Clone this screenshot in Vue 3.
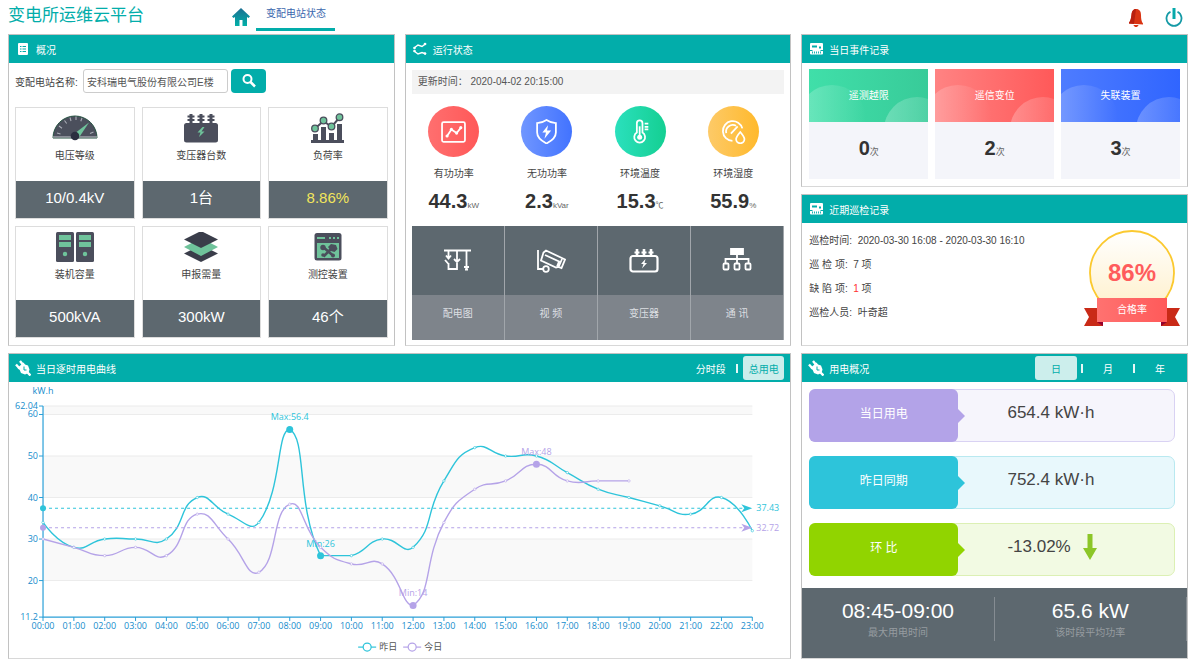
<script setup>
import { ref } from 'vue'

const station = ref('安科瑞电气股份有限公司E楼')
const chartMode = ref('总用电')
const period = ref('日')

const icons = {
  gauge: `<path d="M1 25a22 22 0 0 1 44 0z" fill="#4b4f5c" stroke="#23503f" stroke-width="1"/>
    <path d="M1 24h44" stroke="#c9ccd2" stroke-width="1.2"/>
    <path d="M5 20l3.500 1M7 13l3 2.200M12.500 7.500l2.200 3M18 4.500l1 3.500M24 3.500v3.500M30 5l-1.200 3.200M41.500 19l-3.500 1.500" stroke="#a9adb6" stroke-width="1.100"/>
    <path d="M22.500 20.500L37 9.500l-10 15z" fill="#6fc39b"/><circle cx="23" cy="23" r="4.300" fill="#2b2f3f"/>`,
  transformer: `<path d="M13 1v9M23 1v9M33 1v9" stroke="#4b4e5c" stroke-width="3"/>
    <path d="M9.500 3.500h7M9.500 7h7M19.500 3.500h7M19.500 7h7M29.500 3.500h7M29.500 7h7" stroke="#4b4e5c" stroke-width="1.800"/>
    <rect x="6" y="10" width="34" height="19.500" rx="2.500" fill="#4b4e5c"/>
    <path d="M24.500 14l-5 5.500h3l-1.500 4.500 5.500-5.500h-3l3-4.500z" fill="#6fc39b"/>`,
  load: `<path d="M6 28.500h33" stroke="#4b4e5c" stroke-width="3"/><path d="M10.500 28v-7M18.500 28v-14M26.500 28v-8M34.500 28v-17" stroke="#4b4e5c" stroke-width="5"/>
    <path d="M10 15.500l8.500-7.500 8 6 8-9.500" fill="none" stroke="#4b4e5c" stroke-width="2"/>
    <g fill="#6fc39b" stroke="#4b4e5c" stroke-width="1.300"><circle cx="10" cy="15.500" r="3.300"/><circle cx="18.500" cy="7.500" r="3.300"/><circle cx="26.500" cy="13.500" r="3.300"/><circle cx="34.500" cy="4.200" r="3.300"/></g>`,
  servers: `<g fill="#4b4e5c"><rect x="4" y="0" width="18" height="30" rx="1.500"/><rect x="24" y="0" width="18" height="30" rx="1.500"/></g>
    <g fill="#6fc39b"><path d="M7 3h12v5H7zM7 10h12v5H7zM27 3h12v5H27zM27 10h12v5H27z"/><circle cx="13" cy="22" r="2.200"/><circle cx="33" cy="22" r="2.200"/></g>`,
  layers: `<path d="M23 13l17 8.500-17 8.500-17-8.500z" fill="#3a3d4a"/><path d="M23 6l17 9-17 9-17-9z" fill="#6fc39b"/><path d="M23-1l17 8.500L23 16 6 7.500z" fill="#3a3d4a"/>`,
  device: `<rect x="9.500" y="1" width="27" height="27.500" rx="2.500" fill="#4b4e5c"/><path d="M12 11h22v15H12z" fill="#6fc39b"/>
    <path d="M12 6h8M24 6h2M28 6h2M32 6h2" stroke="#6fc39b" stroke-width="1.800"/>
    <path d="M17 14l11.500 10M29 14L18.500 24.500" stroke="#4b4e5c" stroke-width="2.600"/><circle cx="18" cy="15.500" r="2.700" fill="#4b4e5c"/><path d="M23 15l3-3 5 1 1.500 4-3 3-3.500-1z" fill="#4b4e5c"/><circle cx="18" cy="23" r="1.800" fill="#4b4e5c"/><circle cx="28" cy="23.500" r="2" fill="#4b4e5c"/>`,
  trend: `<rect x="1" y="3" width="22" height="19" rx="1.500"/><path d="M6 16l4-6 5 3.500 4-5"/><g fill="#fff" stroke="none"><circle cx="5.800" cy="16.300" r="1.500"/><circle cx="10" cy="9.800" r="1.500"/><circle cx="15" cy="13.500" r="1.500"/><circle cx="19" cy="8.300" r="1.500"/></g>`,
  shield: `<path d="M12 1c3 2 6 3 9 3v9c0 5-4 8-9 10.500C7 21 3 18 3 13V4c3 0 6-1 9-3z"/><path d="M13.500 6L8 13h3.500l-1.500 6 6.500-8h-4z" fill="#fff" stroke="none"/>`,
  thermometer: `<path d="M8.500 13V4a2.700 2.700 0 0 1 5.400 0v9a5.200 5.200 0 1 1-5.400 0z"/><path d="M11.200 7v10"/><circle cx="11.200" cy="17.500" r="2.400" fill="#fff" stroke="none"/><path d="M16 4.500h3.500M16 7.500h3.500M16 10h3.500"/>`,
  humidity: `<path d="M11 21A9.500 9.500 0 1 1 20.500 9"/><path d="M5 13.500a6.500 6.500 0 0 1 9.500-7M9.500 14l6.500-7"/><path d="M18.500 12.500c-2.500 3-4 4.800-4 6.800a4 4 0 0 0 8 0c0-2-1.500-3.800-4-6.800z"/>`,
  diagram: `<path d="M1 2.500h27M5.500 3v7M3 7.500l2.500 3 2.500-3M2 12l3.500 4M5.500 15v6h8.500V3M11 11l3 3 3-3M23.500 3v18M21 19h5M22 21.500h3"/>`,
  camera: `<path d="M2 2v20M2 21h6"/><path d="M10 2.500l19 9-3.500 8.500-3-1.200-2.500.8-15-7 2.500-8z"/><path d="M9 7l14 6.500-2 5M26 11l-3 7"/><circle cx="10" cy="21" r="2.800"/>`,
  transformerLine: `<rect x="1.500" y="8" width="27" height="15.500" rx="2.500" stroke-width="2.200"/><path d="M8 1v7M15 1v7M22 1v7" stroke-width="2.600"/><path d="M5.500 4.500h5M12.500 4.500h5M19.500 4.500h5"/><path d="M16.500 11L12 16h2.500L13 20.500l5-5.500h-2.500z" fill="#fff" stroke="none"/>`,
  network: `<path d="M9 1h12v5H9z" fill="#fff"/><path d="M15 6v9M3.500 15v-4h23v4"/><rect x="1.500" y="15.500" width="5" height="6" rx="1"/><rect x="12.500" y="15.500" width="5" height="6" rx="1"/><rect x="23.500" y="15.500" width="5" height="6" rx="1"/>`,
  list: `<rect x="3" y="2" width="10" height="12" rx="1" fill="#fff"/><path d="M5 5.500h1.500M7.500 5.500H11M5 8h1.500M7.500 8H11M5 10.500h1.500M7.500 10.500H11" stroke="#02adaa"/>`,
  lines: `<path d="M2 7l4-3 4 1.500L14 2.500M2 10l4 3 4-1.500 4 1.500" fill="none" stroke="#fff" stroke-width="1.500"/><g fill="#fff"><circle cx="2.500" cy="7" r="1.300"/><circle cx="13" cy="3" r="1.300"/><circle cx="2.500" cy="10" r="1.300"/><circle cx="13" cy="12.500" r="1.300"/></g>`,
  meter: `<rect x="2" y="2" width="13" height="11.500" rx="1" fill="#fff"/><path d="M4 4.500h5v2H4zM11 5.500h2v2h-2z" fill="#02adaa"/><path d="M2 9.500h2.500M12.500 9.500H15" stroke="#02adaa"/><path d="M4.500 12.500v-2M6.500 12.500v-2M8.500 12.500v-2M10.500 12.500v-2M12.500 12.500v-2" stroke="#02adaa" stroke-width="0.900"/>`,
  plug: `<path d="M5 1l4 5M1 4.500l4 4.500" stroke="#fff" stroke-width="2.400"/><path d="M2.500 8L8.500 2.500 10 4.500l3 1 1.500 4-1 3.500-3.500 1.500-4-1.500-1.500-3.500z" fill="#fff"/><path d="M12 12l3.500 3.500" stroke="#fff" stroke-width="2.400"/><path d="M9 6.500v3.500h2.500" fill="none" stroke="#02adaa"/>`
}

const facts = [
  { icon: 'gauge', label: '电压等级', value: '10/0.4kV' },
  { icon: 'transformer', label: '变压器台数', value: '1台' },
  { icon: 'load', label: '负荷率', value: '8.86%', warn: true },
  { icon: 'servers', label: '装机容量', value: '500kVA' },
  { icon: 'layers', label: '申报需量', value: '300kW' },
  { icon: 'device', label: '测控装置', value: '46个' }
]
const metrics = [
  { icon: 'trend', tone: 'red', label: '有功功率', value: '44.3', unit: 'kW' },
  { icon: 'shield', tone: 'blue', label: '无功功率', value: '2.3', unit: 'kVar' },
  { icon: 'thermometer', tone: 'green', label: '环境温度', value: '15.3', unit: '℃' },
  { icon: 'humidity', tone: 'amber', label: '环境湿度', value: '55.9', unit: '%' }
]
const shortcuts = [
  { icon: 'diagram', label: '配电图' },
  { icon: 'camera', label: '视 频' },
  { icon: 'transformerLine', label: '变压器' },
  { icon: 'network', label: '通 讯' }
]
const events = [
  { tone: 'green', label: '遥测越限', count: 0 },
  { tone: 'red', label: '遥信变位', count: 2 },
  { tone: 'blue', label: '失联装置', count: 3 }
]
const usage = [
  { tone: 'violet', label: '当日用电', value: '654.4 kW·h' },
  { tone: 'cyan', label: '昨日同期', value: '752.4 kW·h' },
  { tone: 'lime', label: '环 比', value: '-13.02%', down: true }
]

/* Hourly consumption chart */
const yesterday = [34, 28, 30, 30, 30, 40, 36, 34, 56.4, 26, 26, 30, 28, 44, 52, 50, 50, 46, 42, 40, 38, 36, 40, 32]
const today = [30, 28, 26, 28, 26, 36, 30, 22, 38.4, 28, 24, 24, 14, 34, 42, 44, 48, 44, 44, 44]
const left = 34
const right = 743
const px = i => left + (i * (right - left)) / 23
const py = v => 235 - (v - 11.2) * 4.15
const hours = yesterday.map((_, i) => ({ x: px(i), text: String(i).padStart(2, '0') + ':00' }))
const ticks = [11.2, 20, 30, 40, 50, 60, 62.04]
const bands = [[20, 30], [40, 50], [60, 62.04]]

function smooth(values) {
  const pts = values.map((v, i) => [px(i), py(v)])
  const ys = pts.map(p => p[1])
  const low = Math.min(...ys)
  const high = Math.max(...ys)
  const clamp = y => Math.min(high, Math.max(low, y))
  let d = `M${pts[0]}`
  let c0 = pts[0]
  for (let i = 1; i < pts.length; i++) {
    const p = pts[i]
    const prev = pts[i - 1]
    const next = pts[i + 1] || p
    const a = Math.hypot(p[0] - prev[0], p[1] - prev[1])
    const b = Math.hypot(p[0] - next[0], p[1] - next[1])
    const r = b / (a + b)
    const vx = next[0] - prev[0]
    const vy = next[1] - prev[1]
    const last = i === pts.length - 1
    const c1 = last ? p : [p[0] - vx * 0.5 * (1 - r), clamp(p[1] - vy * 0.5 * (1 - r))]
    d += `C${c0} ${c1} ${p}`
    c0 = [p[0] + vx * 0.5 * r, clamp(p[1] + vy * 0.5 * r)]
  }
  return d
}

const series = [
  { name: '昨日', color: '#2ec4da', values: yesterday, avg: 37.43, marks: [[8, 56.4, 'Max:56.4'], [9, 26, 'Min:26']] },
  { name: '今日', color: '#b5a3e8', values: today, avg: 32.72, marks: [[16, 48, 'Max:48'], [12, 14, 'Min:14']] }
]
</script>

<template>
  <div class="page">
    <header class="top">
      <h1>变电所运维云平台</h1>
      <nav>
        <a href="#" class="home" aria-label="首页">
          <svg width="18" height="20" viewBox="0 0 18 20">
            <defs><linearGradient id="homeFill" x1="0" y1="0" x2="0" y2="1"><stop offset="0" stop-color="#1c6f92" /><stop offset="1" stop-color="#00b0a8" /></linearGradient></defs>
            <path d="M9 1L0 9.500 1.500 11 3 10v9h4.500v-6h3v6H15v-9l1.500 1L18 9.500z" fill="url(#homeFill)" />
          </svg>
        </a>
        <a href="#" class="tab">变配电站状态</a>
      </nav>
      <div class="tools">
        <button type="button" aria-label="告警">
          <svg width="16" height="20" viewBox="0 0 16 20">
            <path d="M8 1c3.500 0 5 2.500 5 6 0 4 .5 6.500 2 8.500v1L1 15.500v-1C2.500 13 3 10.500 3.500 7 3.800 3.500 5 1 8 1z" fill="#d93413" />
            <path d="M8 1c-3 0-4.200 2.500-4.500 6C3 10.500 2.500 13 1 14.500v1l5 .5z" fill="#b8200f" /><path d="M5.500 17h5c-.5 1.500-1.500 2-2.500 2s-2-.5-2.500-2z" fill="#d93413" />
          </svg>
        </button>
        <button type="button" aria-label="退出">
          <svg width="18" height="20" viewBox="0 0 18 20"><path d="M5.500 3.700a7.500 7.500 0 1 0 7 0" fill="none" stroke="#159aa6" stroke-width="1.800" /><path d="M9 0v11" stroke="#07a9aa" stroke-width="3" /></svg>
        </button>
      </div>
    </header>

    <main class="board">
      <section class="panel">
        <h2><svg width="16" height="16" viewBox="0 0 16 16" v-html="icons.list" />概况</h2>
        <div class="overview">
          <form class="search" @submit.prevent>
            <label for="station">变配电站名称:</label>
            <input id="station" v-model="station" type="text" />
            <button type="submit" aria-label="查询">
              <svg width="16" height="16" viewBox="0 0 16 16"><circle cx="6.500" cy="6" r="4" fill="none" stroke="#fff" stroke-width="2" /><path d="M9.500 9l4.500 4.500" stroke="#fff" stroke-width="2.500" /></svg>
            </button>
          </form>
          <div class="facts">
            <article v-for="f in facts" :key="f.label" class="fact">
              <div class="fact-head">
                <svg width="46" height="30" viewBox="0 0 46 30" v-html="icons[f.icon]" />
                <span>{{ f.label }}</span>
              </div>
              <strong :class="{ warn: f.warn }">{{ f.value }}</strong>
            </article>
          </div>
        </div>
      </section>

      <section class="panel">
        <h2><svg width="16" height="16" viewBox="0 0 16 16" v-html="icons.lines" />运行状态</h2>
        <div class="status">
          <p class="updated">更新时间： 2020-04-02 20:15:00</p>
          <div class="metrics">
            <div v-for="m in metrics" :key="m.label" class="metric">
              <span class="disc" :class="m.tone">
                <svg width="25" height="25" viewBox="0 0 24 24" fill="none" stroke="#fff" stroke-width="1.700" v-html="icons[m.icon]" />
              </span>
              <span class="metric-label">{{ m.label }}</span>
              <span class="reading"><b>{{ m.value }}</b><small>{{ m.unit }}</small></span>
            </div>
          </div>
          <div class="shortcuts">
            <a v-for="s in shortcuts" :key="s.label" href="#">
              <span class="pic"><svg width="30" height="25" viewBox="0 0 30 25" fill="none" stroke="#fff" stroke-width="1.800" v-html="icons[s.icon]" /></span>
              <span class="name">{{ s.label }}</span>
            </a>
          </div>
        </div>
      </section>

      <div class="side">
        <section class="panel">
          <h2><svg width="16" height="16" viewBox="0 0 16 16" v-html="icons.meter" />当日事件记录</h2>
          <div class="events">
            <div v-for="e in events" :key="e.label" class="event">
              <div class="event-head" :class="e.tone"><span>{{ e.label }}</span></div>
              <p class="reading"><b>{{ e.count }}</b><small>次</small></p>
            </div>
          </div>
        </section>
        <section class="panel grow">
          <h2><svg width="16" height="16" viewBox="0 0 16 16" v-html="icons.meter" />近期巡检记录</h2>
          <div class="inspection">
            <ul>
              <li>巡检时间:&nbsp; 2020-03-30 16:08 - 2020-03-30 16:10</li>
              <li>巡 检 项:&nbsp; 7 项</li>
              <li>缺 陷 项:&nbsp; <em>1</em> 项</li>
              <li>巡检人员:&nbsp; 叶奇超</li>
            </ul>
            <svg class="badge" width="96" height="98" viewBox="0 0 96 98">
              <defs>
                <linearGradient id="medal" x1="0" y1="0" x2="0" y2="1"><stop offset="0" stop-color="#fff" /><stop offset="1" stop-color="#ffefc8" /></linearGradient>
                <linearGradient id="ribbon"><stop offset="0" stop-color="#ff7270" /><stop offset="1" stop-color="#ff5a5a" /></linearGradient>
              </defs>
              <circle cx="48" cy="44" r="42" fill="url(#medal)" stroke="#fbc92f" stroke-width="1.800" />
              <path d="M0 79h19v18H0l5-9zM96 79H77v18h19l-5-9z" fill="#c92a17" />
              <path d="M13 93h6v4zM83 93h-6v4z" fill="#96002c" />
              <path d="M13 69h70v24H13z" fill="url(#ribbon)" />
              <text x="48" y="52" class="rate">86%</text>
              <text x="48" y="84" class="rate-label">合格率</text>
            </svg>
          </div>
        </section>
      </div>

      <section class="panel wide">
        <h2>
          <svg width="16" height="16" viewBox="0 0 16 16" v-html="icons.plug" />当日逐时用电曲线
          <span class="switch">
            <button type="button" :class="{ on: chartMode === '分时段' }" @click="chartMode = '分时段'">分时段</button>
            <i />
            <button type="button" :class="{ on: chartMode === '总用电' }" @click="chartMode = '总用电'">总用电</button>
          </span>
        </h2>
        <svg class="chart" viewBox="0 0 781 275">
          <rect v-for="b in bands" :key="b[0]" :x="left" :y="py(b[1])" :width="right - left" :height="py(b[0]) - py(b[1])" fill="#f9f9f9" />
          <path v-for="t in ticks.slice(1)" :key="t" :d="`M${left} ${py(t)}H${right}`" stroke="#ececec" />
          <path :d="`M${left} ${py(62.04)}V235H${right}`" fill="none" stroke="#2ba0d8" stroke-width="1.200" />
          <path v-for="t in ticks" :key="'t' + t" :d="`M${left - 4} ${py(t)}h4`" stroke="#2ba0d8" />
          <path v-for="h in hours" :key="h.text" :d="`M${h.x} 235v4`" stroke="#2ba0d8" />
          <text v-for="t in ticks" :key="'y' + t" :x="left - 5" :y="py(t) + 3" text-anchor="end" class="axis">{{ t }}</text>
          <text v-for="h in hours" :key="'x' + h.text" :x="h.x" y="247" text-anchor="middle" class="axis">{{ h.text }}</text>
          <text :x="left" y="12" text-anchor="middle" class="axis">kW.h</text>
          <g v-for="s in series" :key="s.name">
            <path :d="`M${left} ${py(s.avg)}H${right - 4}`" :stroke="s.color" stroke-dasharray="3 3" />
            <circle :cx="left" :cy="py(s.avg)" r="3" :fill="s.color" />
            <path :d="`M${right} ${py(s.avg)}l-11 -4 3 4 -3 4z`" :fill="s.color" />
            <text :x="right + 4" :y="py(s.avg) + 3" :fill="s.color" class="mark">{{ s.avg }}</text>
            <path :d="smooth(s.values)" fill="none" :stroke="s.color" stroke-width="1.400" />
            <circle v-for="(v, i) in s.values" :key="i" :cx="px(i)" :cy="py(v)" r="1.200" fill="#fff" :stroke="s.color" stroke-width="0.600" />
            <g v-for="m in s.marks" :key="m[2]">
              <circle :cx="px(m[0])" :cy="py(m[1])" r="3.500" :fill="s.color" />
              <text :x="px(m[0])" :y="py(m[1]) - 9" :fill="s.color" text-anchor="middle" class="mark">{{ m[2] }}</text>
            </g>
          </g>
          <g v-for="(s, i) in series" :key="'l' + s.name">
            <path :d="`M${349 + i * 45} 265h18`" :stroke="s.color" stroke-width="1.200" />
            <circle :cx="358 + i * 45" cy="265" r="4" fill="#fff" :stroke="s.color" stroke-width="1.200" />
            <text :x="370 + i * 45" y="268" class="legend">{{ s.name }}</text>
          </g>
        </svg>
      </section>

      <section class="panel power">
        <h2>
          <svg width="16" height="16" viewBox="0 0 16 16" v-html="icons.plug" />用电概况
          <span class="switch periods">
            <template v-for="(p, i) in ['日', '月', '年']" :key="p">
              <i v-if="i" />
              <button type="button" :class="{ on: period === p }" @click="period = p">{{ p }}</button>
            </template>
          </span>
        </h2>
        <div class="usage">
          <div v-for="u in usage" :key="u.label" class="use" :class="u.tone">
            <span class="use-label">{{ u.label }}</span>
            <span class="use-value">{{ u.value }}
              <svg v-if="u.down" width="14" height="26" viewBox="0 0 14 26"><path d="M4.500 0h5v14H14L7 26 0 14h4.500z" fill="#8cc627" /></svg>
            </span>
          </div>
        </div>
        <div class="peak">
          <div><b>08:45-09:00</b><span>最大用电时间</span></div>
          <div><b>65.6 kW</b><span>该时段平均功率</span></div>
        </div>
      </section>
    </main>
  </div>
</template>

<style>
body {
  margin: 0;
  background: #fff;
}
</style>

<style scoped>
.page {
  font-family: "Liberation Sans", "Noto Sans CJK SC", sans-serif;
  font-size: 10px;
  color: #444;
  padding: 0 4px 8px 8px;
}
.page * { box-sizing: border-box; }
h1, h2, p, ul { margin: 0; padding: 0; font-weight: 400; }
ul { list-style: none; }
a { text-decoration: none; color: inherit; }
button { border: 0; background: none; padding: 0; font: inherit; color: inherit; cursor: pointer; }
svg { display: block; flex: none; }

.top { display: flex; align-items: flex-start; height: 34px; }
h1 { font-size: 17px; line-height: 31px; width: 224px; color: #02adaa; }
nav { display: flex; }
.home { padding-top: 7px; width: 24px; }
.tab {
  width: 79px;
  height: 31px;
  padding-left: 10px;
  line-height: 27px;
  color: #3b68ae;
  border-bottom: 3px solid #02adaa;
}
.tools { display: flex; gap: 21px; margin-left: auto; padding: 8px 5px 0 0; }

.board { display: grid; grid-template-columns: repeat(3, minmax(0, 1fr)); gap: 7px 10px; }
.wide { grid-column: span 2; }
.side { display: flex; flex-direction: column; gap: 7px; }
.grow { flex: 1; }
.panel { display: flex; flex-direction: column; border: 1px solid #c2c2c2; border-bottom-color: #d8d8d8; background: #fff; }
h2 {
  display: flex;
  align-items: center;
  gap: 5px;
  height: 28px;
  padding: 0 6px;
  font-size: 10px;
  background: #02adaa;
  color: #fff;
}

.overview { padding: 6px 6px 5px; }
.search { display: flex; align-items: center; gap: 3px; height: 24px; }
.search label { width: 65px; white-space: nowrap; }
.search input {
  width: 145px;
  height: 24px;
  padding: 0 3px;
  border: 1px solid #ccc;
  border-radius: 3px;
  font: inherit;
  color: #555;
}
.search button { display: grid; place-items: center; width: 35px; height: 24px; border-radius: 4px; background: #02adaa; }
.facts { display: grid; grid-template-columns: repeat(3, 1fr); gap: 7px; margin-top: 14px; }
.fact { border: 1px solid #ddd; }
.fact-head { display: flex; flex-direction: column; align-items: center; gap: 5px; height: 73px; padding-top: 5px; line-height: 16px; }
.fact strong { display: block; height: 37px; font-weight: 400; font-size: 15px; line-height: 34px; text-align: center; color: #fff; background: #5d686f; }
.fact strong.warn { color: #f2e55c; }

.status { padding: 7px 6px 5px; }
.updated { padding: 0 6px; line-height: 24px; background: #f3f3f3; color: #555; white-space: pre; }
.metrics { display: grid; grid-template-columns: repeat(4, 1fr); margin: 12px 0 0; height: 120px; }
.metric { display: flex; flex-direction: column; align-items: center; padding-right: 9px; }
.disc { display: grid; place-items: center; width: 51px; height: 51px; border-radius: 50%; }
.disc.red { background: linear-gradient(90deg, #ff6f6f, #ff5858); }
.disc.blue { background: linear-gradient(90deg, #7096ff, #4273ff); }
.disc.green { background: linear-gradient(90deg, #2be0bd, #14cf92); }
.disc.amber { background: linear-gradient(90deg, #fdca68, #ffb92c); }
.metric-label { margin-top: 9px; line-height: 16px; }
.reading { line-height: 24px; margin-top: 7px; white-space: nowrap; text-align: center; }
.reading b { font-size: 20px; color: #333; }
.reading small { font-size: 8px; color: #666; }
.shortcuts { display: grid; grid-template-columns: repeat(4, 1fr); }
.shortcuts a { display: block; border-right: 1px solid #a1a6ab; color: #dcdfe2; }
.pic { display: grid; place-items: center; height: 69px; background: #5d686f; }
.name { display: block; height: 45px; line-height: 38px; text-align: center; background: #7e848b; }

.events { display: grid; grid-template-columns: repeat(3, 1fr); gap: 7px; padding: 6px 7px 7px; }
.event { height: 110px; background: #f4f5fa; }
.event-head { position: relative; overflow: hidden; height: 53px; line-height: 53px; text-align: center; color: #fff; }
.event-head::before, .event-head::after {
  content: "";
  position: absolute;
  border-radius: 50%;
  background: linear-gradient(90deg, rgba(255, 255, 255, 0.250), rgba(255, 255, 255, 0));
}
.event-head::before { left: -11px; top: 16px; width: 68px; height: 68px; }
.event-head::after { right: -22px; top: 28px; width: 66px; height: 66px; background: linear-gradient(90deg, rgba(255, 255, 255, 0.250), rgba(255, 255, 255, 0.050)); }
.event-head.green { background: linear-gradient(90deg, #40dfa9, #38cb99); }
.event-head.red { background: linear-gradient(90deg, #ff8383, #ff5959); }
.event-head.blue { background: linear-gradient(90deg, #4e7cff, #3065ff); }
.event .reading { margin-top: 14px; }
.event small { font-size: 9px; }

.inspection { display: flex; justify-content: space-between; padding: 6px 7px; }
.inspection li { line-height: 24px; white-space: nowrap; }
.inspection em { font-style: normal; color: #f33; }
.rate { font-size: 24px; font-weight: 700; fill: #ff5c5c; text-anchor: middle; }
.rate-label { font-size: 10px; fill: #fff; text-anchor: middle; }

.switch { display: flex; align-items: center; gap: 5px; margin-left: auto; }
.switch button { width: 41px; height: 24px; border-radius: 3px; }
.switch .on { background: #cceeec; color: #02adaa; }
.switch i { width: 2px; height: 9px; background: #e6f7f7; }
.periods { gap: 4px; }
.periods button { width: 42px; }

.chart { width: 100%; height: auto; }
.chart text { font-family: "Open Sans", "Noto Sans", "Noto Sans CJK SC", sans-serif; font-size: 9px; }
.axis { fill: #148ccc; }
.legend { fill: #555; }

.usage { display: flex; flex-direction: column; gap: 14px; padding: 7px 12px 12px 7px; }
.use { display: flex; height: 53px; border: 1px solid; border-radius: 7px; }
.use-label {
  position: relative;
  width: 41%;
  margin: -1px;
  border-radius: 6px;
  font-size: 12px;
  line-height: 50px;
  text-align: center;
  color: #fff;
}
.use-label::after {
  content: "";
  position: absolute;
  left: 100%;
  top: 20px;
  border: 7px solid transparent;
  border-left-color: inherit;
  border-right-width: 0;
}
.use-value { display: flex; align-items: center; gap: 12px; padding: 0 0 5px 50px; font-size: 17px; color: #444; }
.violet { background: #f6f5fc; border-color: #d9d2f3; }
.violet .use-label { background: #b3a3e8; border-color: #b3a3e8; }
.cyan { background: #e8f8fc; border-color: #b9e9f0; }
.cyan .use-label { background: #2dc4da; border-color: #2dc4da; }
.lime { background: #f2fae3; border-color: #dcf0b4; }
.lime .use-label { background: #91d400; border-color: #91d400; }
.peak { display: grid; grid-template-columns: repeat(2, 1fr); flex: 1; padding: 9px 0 17px; background: #5d686f; text-align: center; }
.peak div { display: flex; flex-direction: column; border-right: 1px solid #858c92; }
.peak b { font-size: 21px; font-weight: 400; line-height: 28px; color: #fff; }
.peak span { line-height: 16px; color: #969ca0; }
</style>
